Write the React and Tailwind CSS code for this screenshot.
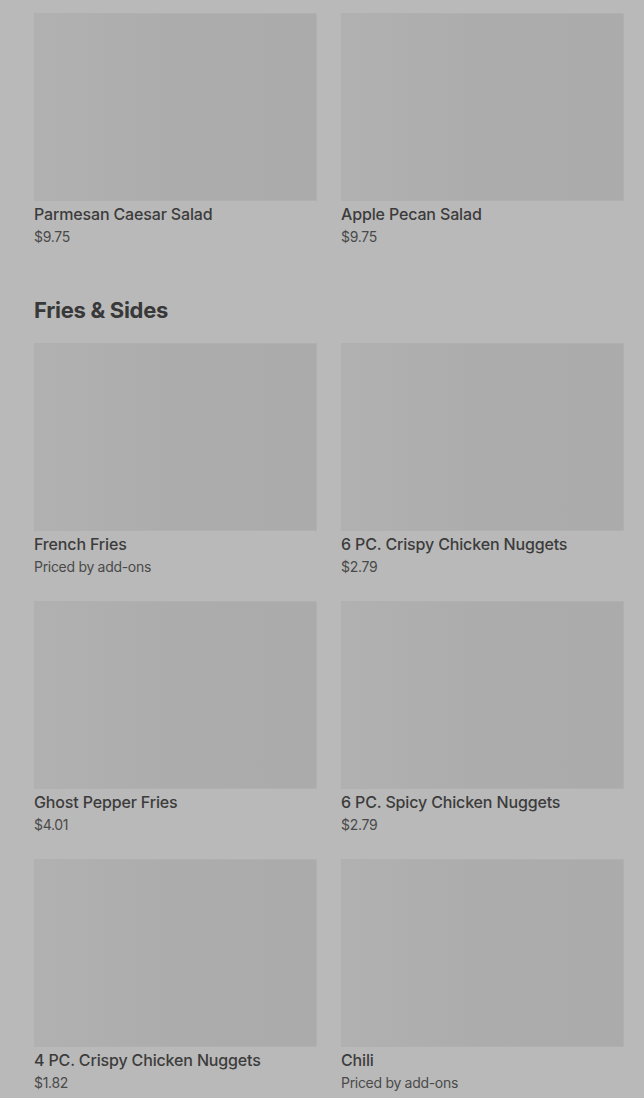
import React from 'react';

const topItems = [
  { name: 'Parmesan Caesar Salad', price: '$9.75' },
  { name: 'Apple Pecan Salad', price: '$9.75' },
];

const sides = [
  { name: 'French Fries', price: 'Priced by add-ons' },
  { name: '6 PC. Crispy Chicken Nuggets', price: '$2.79' },
  { name: 'Ghost Pepper Fries', price: '$4.01' },
  { name: '6 PC. Spicy Chicken Nuggets', price: '$2.79' },
  { name: '4 PC. Crispy Chicken Nuggets', price: '$1.82' },
  { name: 'Chili', price: 'Priced by add-ons' },
];

const ItemCard = ({ item }) => (
  <div className="flex flex-col">
    <div className="h-[188px] w-full bg-gradient-to-r from-[#b1b1b1] via-[#acacac] to-[#ababab] border border-[#b0b0b0]" />
    <div className="mt-[3px] text-[16px] leading-[20px] font-medium text-[#3c3c3c] font-['Inter',sans-serif] tracking-[-0.15px]">
      {item.name}
    </div>
    <div className="mt-[3px] text-[14px] leading-[20px] text-[#4a4a4a] font-['Inter',sans-serif] tracking-[-0.3px]">
      {item.price}
    </div>
  </div>
);

export default function App() {
  return (
    <div className="min-h-[1098px] w-[644px] overflow-hidden bg-[#b9b9b9] pl-[34px] pt-[13px]">
      <div className="grid grid-cols-[283px_283px] gap-x-[24px] gap-y-[24px]">
        {topItems.map((it) => (
          <ItemCard key={it.name} item={it} />
        ))}
      </div>

      <h2 className="mt-[49px] mb-[19px] text-[22px] leading-[28px] font-bold text-[#383838] font-['Inter',sans-serif] tracking-[-0.3px]">
        Fries &amp; Sides
      </h2>

      <div className="grid grid-cols-[283px_283px] gap-x-[24px] gap-y-[24px]">
        {sides.map((it) => (
          <ItemCard key={it.name} item={it} />
        ))}
      </div>
    </div>
  );
}
